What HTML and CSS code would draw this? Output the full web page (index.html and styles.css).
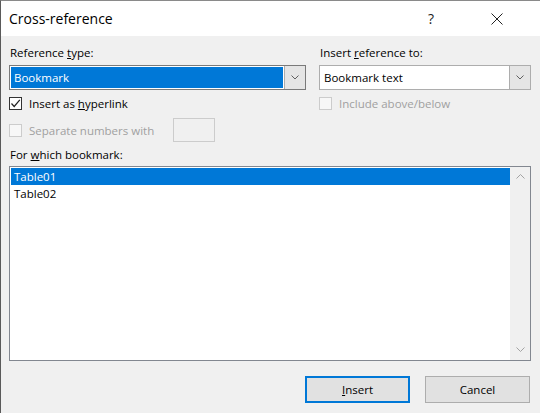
FILE: index.html
```html
<!DOCTYPE html>
<html lang="en">
<head>
  <meta charset="UTF-8">
  <title>Cross-reference</title>
  <link rel="stylesheet" href="styles.css">
</head>
<body>
  <div class="window">
    <div class="titlebar">
      <span class="title">Cross-reference</span>
      <span class="help">?</span>
      <svg class="close" viewBox="0 0 12 12" width="12" height="12">
        <line x1="0.5" y1="0.5" x2="11.5" y2="11.5"></line>
        <line x1="11.5" y1="0.5" x2="0.5" y2="11.5"></line>
      </svg>
    </div>

    <div class="content">
      <div class="top-grid">
        <div class="label">Reference <u>t</u>ype:</div>
        <div class="label">Insert <u>r</u>eference to:</div>

        <div class="combo focused">
          <div class="combo-value selected">Bookmark</div>
          <div class="combo-btn">
            <svg viewBox="0 0 8 5" width="8" height="5"><polyline points="0.5,0.5 4,4 7.5,0.5"></polyline></svg>
          </div>
        </div>
        <div class="combo">
          <div class="combo-value">Bookmark text</div>
          <div class="combo-btn">
            <svg viewBox="0 0 8 5" width="8" height="5"><polyline points="0.5,0.5 4,4 7.5,0.5"></polyline></svg>
          </div>
        </div>

        <label class="check-row">
          <span class="box checked">
            <svg viewBox="0 0 11 11" width="11" height="11"><polyline points="1.5,5.5 4.2,8.5 9.8,1.8"></polyline></svg>
          </span>
          <span>Insert as <u>h</u>yperlink</span>
        </label>
        <label class="check-row disabled">
          <span class="box"></span>
          <span>Include above/below</span>
        </label>

        <div class="check-row sep-row disabled">
          <span class="box"></span>
          <span class="sep-text">Separate numbers with</span>
          <span class="textbox"></span>
        </div>
      </div>

      <div class="label list-label">For <u>w</u>hich bookmark:</div>
      <div class="listbox">
        <div class="items">
          <div class="item selected">Table01</div>
          <div class="item">Table02</div>
        </div>
        <div class="scrollbar">
          <svg viewBox="0 0 9 5" width="9" height="5"><polyline points="0.5,4.5 4.5,0.5 8.5,4.5"></polyline></svg>
          <svg viewBox="0 0 9 5" width="9" height="5"><polyline points="0.5,0.5 4.5,4.5 8.5,0.5"></polyline></svg>
        </div>
      </div>

      <div class="buttons">
        <button class="btn default"><u>I</u>nsert</button>
        <button class="btn">Cancel</button>
      </div>
    </div>
  </div>
</body>
</html>
```

FILE: styles.css
```css
:root {
  --accent: #0078d7;
  --face: #f0f0f0;
  --text: #000;
  --disabled: #a0a0a0;
}

html, body {
  margin: 0;
  padding: 0;
  background: var(--face);
}

body {
  font-family: "Open Sans", "Noto Sans", sans-serif;
  font-size: 11.5px;
  color: var(--text);
}

u {
  text-decoration: underline;
  text-underline-offset: 1px;
}

.window {
  width: 540px;
  height: 413px;
  box-sizing: border-box;
  border-top: 1px solid #8a8a8a;
  border-left: 1px solid #5a5a5a;
  background: var(--face);
  overflow: hidden;
}

/* title bar */
.titlebar {
  height: 35px;
  background: #fff;
  display: flex;
  align-items: center;
  padding-left: 8px;
}

.title {
  font-size: 14px;
  flex: 1;
  padding-bottom: 1px;
}

.help {
  font-size: 14px;
  color: #222;
  margin-right: 57px;
  padding-bottom: 1px;
}

.close {
  margin-right: 37px;
  stroke: #222;
  stroke-width: 1;
  fill: none;
}

/* form body */
.content {
  padding: 9px 9px 0 8px;
}

.top-grid {
  display: grid;
  grid-template-columns: 297px 212px;
  column-gap: 13px;
  align-items: center;
}

.label {
  height: 16px;
  line-height: 16px;
  padding-left: 1px;
}

.combo {
  margin-top: 4px;
  height: 25px;
  box-sizing: border-box;
  border: 1px solid #adadad;
  background: #fff;
  display: flex;
}

.combo.focused {
  border-color: #7a7a7a;
}

.combo-value {
  flex: 1;
  margin: 1px;
  padding-left: 3px;
  line-height: 21px;
}

.combo-value.selected {
  background: var(--accent);
  color: #fff;
}

.combo-btn {
  width: 20px;
  background: #e5e5e5;
  border-left: 1px solid #adadad;
  display: flex;
  align-items: center;
  justify-content: center;
}

.combo-btn svg,
.scrollbar svg {
  fill: none;
  stroke: #606060;
  stroke-width: 1;
}

.check-row {
  display: flex;
  align-items: center;
  height: 16px;
  margin-top: 5px;
}

.box {
  width: 13px;
  height: 13px;
  box-sizing: border-box;
  border: 1px solid #333;
  background: #fff;
  margin-right: 7px;
  display: flex;
  align-items: center;
  justify-content: center;
}

.box svg {
  fill: none;
  stroke: #222;
  stroke-width: 1.2;
}

.disabled {
  color: var(--disabled);
}

.disabled .box {
  border-color: #cccccc;
  background: #f7f7f7;
}

.sep-row {
  height: 24px;
  margin-top: 7px;
}

.sep-text {
  width: 144px;
}

.textbox {
  width: 42px;
  height: 24px;
  box-sizing: border-box;
  border: 1px solid #cccccc;
  background: var(--face);
}

.list-label {
  margin-top: 5px;
}

.listbox {
  margin-top: 3px;
  height: 195px;
  box-sizing: border-box;
  border: 1px solid #828790;
  background: #fff;
  display: flex;
  padding: 1px 0 1px 1px;
}

.items {
  flex: 1;
}

.item {
  height: 17px;
  line-height: 17px;
  padding-left: 3px;
}

.item.selected {
  background: var(--accent);
  color: #fff;
}

.scrollbar {
  width: 20px;
  margin-top: -1px;
  margin-bottom: -1px;
  background: var(--face);
  display: flex;
  flex-direction: column;
  justify-content: space-between;
  align-items: center;
  padding: 7px 0 8px;
}

.scrollbar svg {
  stroke: #a3a3a3;
}

.buttons {
  display: flex;
  justify-content: flex-end;
  gap: 15px;
  margin-top: 15px;
  padding-right: 1px;
}

.btn {
  width: 105px;
  height: 27px;
  box-sizing: border-box;
  font-family: inherit;
  font-size: 11.5px;
  color: var(--text);
  background: #e1e1e1;
  border: 1px solid #adadad;
  padding: 0;
}

.btn.default {
  border: 2px solid var(--accent);
}
```
